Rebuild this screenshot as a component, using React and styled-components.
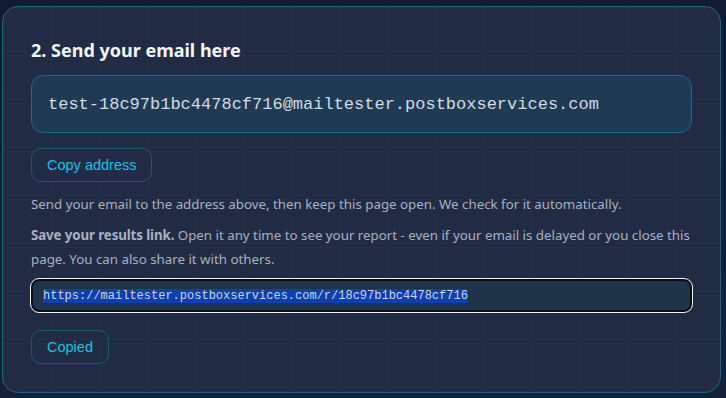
import React from "react";
import styled, { createGlobalStyle } from "styled-components";

const Global = createGlobalStyle`
  html, body {
    margin: 0;
    padding: 0;
    background: #121b31;
  }
  body {
    font-family: "Noto Sans", "Open Sans", sans-serif;
  }
`;

const Page = styled.div`
  width: 726px;
  height: 398px;
  box-sizing: border-box;
  padding: 6px 5px 5px 2px;
  background: linear-gradient(180deg, #101a30 0%, #162038 100%);
`;

const Card = styled.section`
  height: 100%;
  box-sizing: border-box;
  padding: 30px 28px 0 28px;
  border: 1px solid #1a6585;
  border-radius: 16px;
  background-color: #212b43;
  background-image: linear-gradient(rgba(60, 140, 170, 0.06) 1px, transparent 1px),
    linear-gradient(90deg, rgba(60, 140, 170, 0.06) 1px, transparent 1px);
  background-size: 48px 48px;
`;

const Title = styled.h2`
  margin: 0 0 12px;
  font-size: 18px;
  line-height: 26px;
  font-weight: 700;
  color: #f3f5f9;
`;

const AddressBox = styled.div`
  box-sizing: border-box;
  height: 58px;
  display: flex;
  align-items: center;
  padding: 0 16px;
  border: 1px solid #1b6a8a;
  border-radius: 12px;
  background: #1f3b53;
  font-family: "Liberation Mono", monospace;
  font-size: 17px;
  color: #d3dae3;
`;

const Button = styled.button`
  display: block;
  height: 34px;
  padding: 0 15px;
  margin-top: ${(p) => p.$top}px;
  border: 1px solid #1a5a76;
  border-radius: 10px;
  background: transparent;
  font-family: "Liberation Sans", Arial, sans-serif;
  font-size: 14.5px;
  color: #17c3e8;
`;

const Text = styled.p`
  margin: ${(p) => p.$top}px 0 0;
  font-size: 13.3px;
  line-height: 24px;
  color: #a8b1c2;
  white-space: ${(p) => (p.$fixed ? "nowrap" : "normal")};

  strong {
    font-weight: 700;
    letter-spacing: -0.1px;
  }
`;

const LinkField = styled.div`
  box-sizing: border-box;
  height: 33px;
  margin-top: 8px;
  display: flex;
  align-items: center;
  padding: 0 10px;
  border: 2px solid #0b0d12;
  border-radius: 8px;
  outline: 1.5px solid #f2f4f7;
  background: #1f3349;
  font-family: "Liberation Mono", monospace;
  font-size: 12px;
  color: #c9d6ea;

  span {
    background: #0d3fae;
  }
`;

export default function App() {
  return (
    <>
      <Global />
      <Page>
        <Card>
          <Title>2. Send your email here</Title>
          <AddressBox>test-18c97b1bc4478cf716@mailtester.postboxservices.com</AddressBox>
          <Button $top={15}>Copy address</Button>
          <Text $top={10}>
            Send your email to the address above, then keep this page open. We check for it automatically.
          </Text>
          <Text $top={7} $fixed>
            <strong>Save your results link.</strong> Open it any time to see your report - even if your email is delayed or you close this
            <br />
            page. You can also share it with others.
          </Text>
          <LinkField>
            <span>https://mailtester.postboxservices.com/r/18c97b1bc4478cf716</span>
          </LinkField>
          <Button $top={18}>Copied</Button>
        </Card>
      </Page>
    </>
  );
}
